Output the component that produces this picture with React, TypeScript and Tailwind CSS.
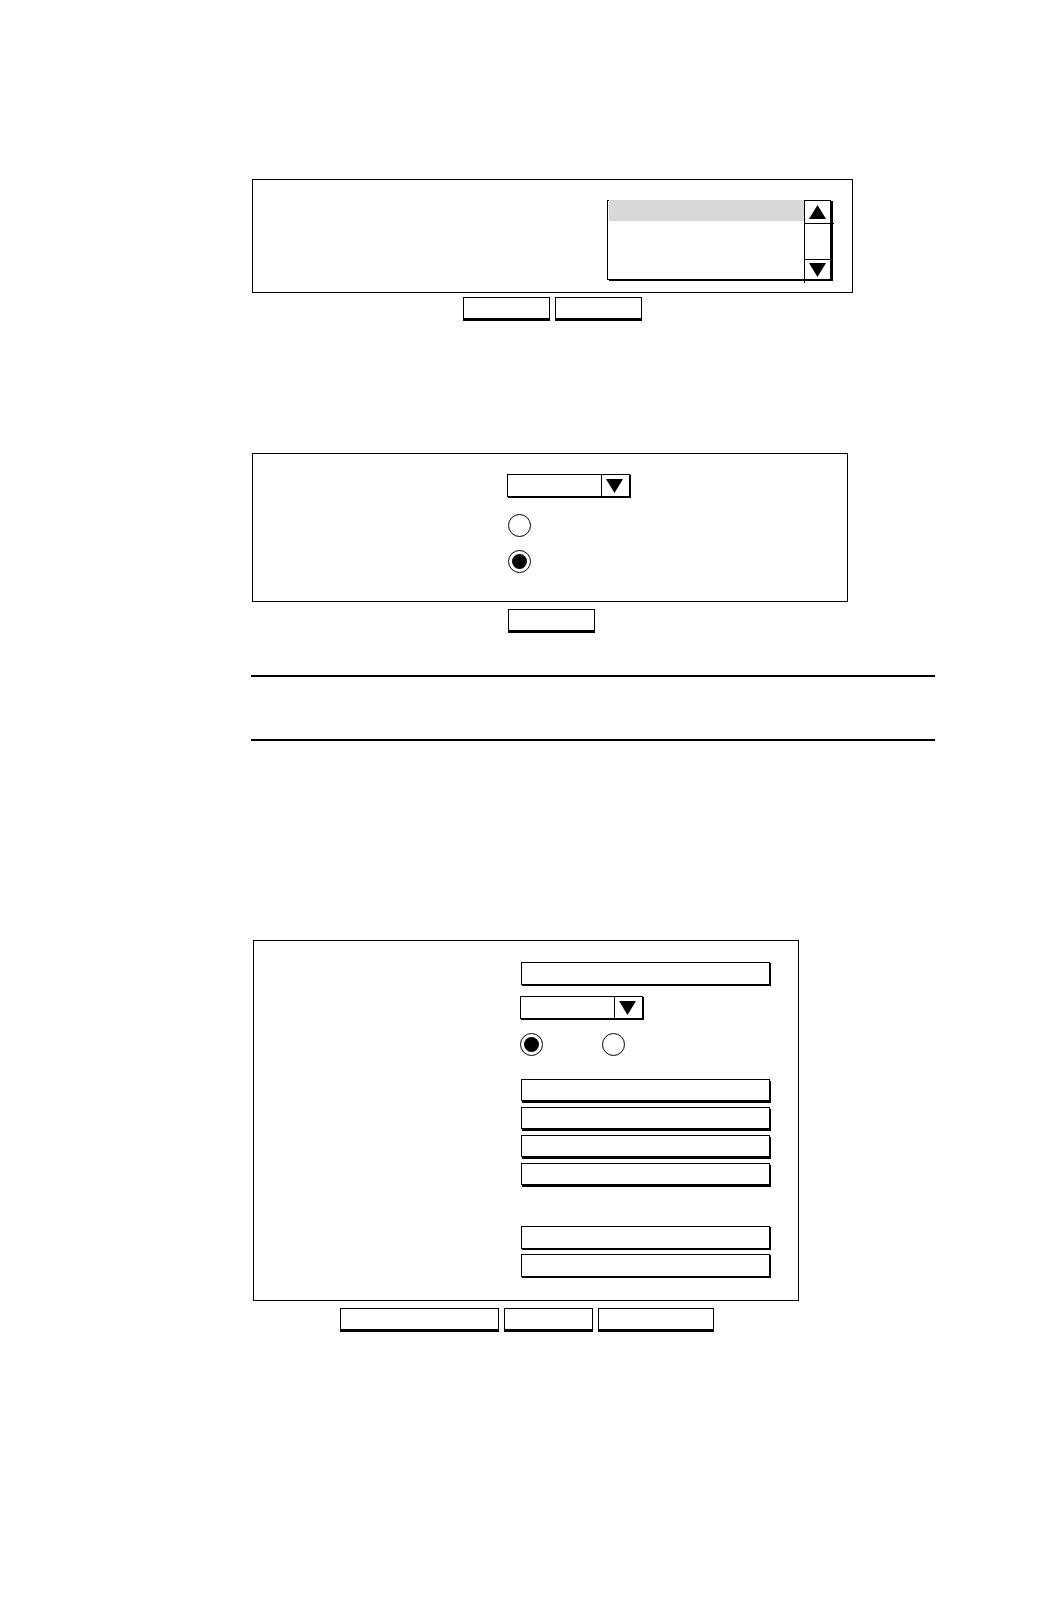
import { useState } from 'react'
import type { ReactNode } from 'react'

function Arrow({ up = false }: { up?: boolean }) {
  return (
    <svg width="17" height="14" viewBox="0 0 17 14" aria-hidden="true" className="block shrink-0">
      <path d={up ? 'M8.5 0L17 14H0Z' : 'M0 0H17L8.5 14Z'} fill="#000" />
    </svg>
  )
}

function Panel({ className, children }: { className: string; children: ReactNode }) {
  return <div className={`w-full border border-black ${className}`}>{children}</div>
}

function Button({ label, className = 'w-[87px]' }: { label: string; className?: string }) {
  return (
    <button
      type="button"
      aria-label={label}
      className={`h-6 border border-b-3 border-black bg-white ${className}`}
    />
  )
}

function TextField({ label, heavy = false }: { label: string; heavy?: boolean }) {
  return (
    <input
      type="text"
      aria-label={label}
      className={`block w-full max-w-[249px] border border-black bg-white px-2 text-sm outline-none ${
        heavy ? 'h-[22px] shadow-[1px_2px_0_#000]' : 'h-[23px] shadow-[1px_1px_0_#000]'
      }`}
    />
  )
}

function Dropdown({ label }: { label: string }) {
  return (
    <div className="relative h-[23px] w-[123px] border border-black shadow-[1px_1px_0_#000]">
      <select aria-label={label} className="block h-full w-full appearance-none bg-white px-2 text-sm outline-none">
        <option />
      </select>
      <span className="pointer-events-none absolute inset-y-0 right-0 flex w-7 items-center border-l border-black pl-1">
        <Arrow />
      </span>
    </div>
  )
}

type RadioProps = { name: string; label: string; defaultChecked?: boolean }

function Radio({ name, label, defaultChecked }: RadioProps) {
  return (
    <input
      type="radio"
      name={name}
      aria-label={label}
      defaultChecked={defaultChecked}
      className="block size-[23px] appearance-none rounded-full border border-black bg-white p-[3px] checked:bg-black checked:bg-clip-content"
    />
  )
}

function ListBox() {
  const [selected, setSelected] = useState(0)

  return (
    <div className="flex h-20 w-56 border border-black shadow-[2px_1px_0_#000]">
      <div
        role="listbox"
        aria-label="Entries"
        tabIndex={0}
        className="-mt-px min-w-0 flex-1 pl-px outline-none"
      >
        {[0, 1, 2].map((item) => (
          <div
            key={item}
            role="option"
            aria-label={`Entry ${item + 1}`}
            aria-selected={item === selected}
            onClick={() => setSelected(item)}
            className="h-[21px] aria-selected:bg-[#d8d8d8]"
          />
        ))}
      </div>
      <div className="-mb-1 flex w-[26px] flex-col border-l border-black pb-1">
        <button
          type="button"
          aria-label="Scroll up"
          onClick={() => setSelected(Math.max(0, selected - 1))}
          className="-mr-1 flex h-[23px] items-center border-b border-black pl-1"
        >
          <Arrow up />
        </button>
        <div className="flex-1" />
        <button
          type="button"
          aria-label="Scroll down"
          onClick={() => setSelected(Math.min(2, selected + 1))}
          className="flex h-5 items-center border-t border-black pl-1"
        >
          <Arrow />
        </button>
      </div>
    </div>
  )
}

export default function App() {
  return (
    <main className="min-h-screen bg-white pt-[179px] pr-[127px] pb-20 pl-[251px] font-['Liberation_Sans',sans-serif] text-black">
      {/* List selection */}
      <form className="ml-px max-w-[601px]">
        <Panel className="flex justify-end pt-5 pr-[21px] pb-3">
          <ListBox />
        </Panel>
        <div className="mt-1 flex justify-center gap-[5px]">
          <Button label="Edit" />
          <Button label="Delete" />
        </div>
      </form>

      {/* Mode settings */}
      <form className="mt-[132px] ml-px max-w-[596px]">
        <Panel className="pt-5 pb-7 pl-[254px]">
          <Dropdown label="Mode" />
          <div className="mt-[17px] flex flex-col gap-[13px] pl-px">
            <Radio name="mode" label="Enable" />
            <Radio name="mode" label="Disable" defaultChecked />
          </div>
        </Panel>
        <div className="mt-[7px] flex pl-64">
          <Button label="Apply" />
        </div>
      </form>

      <div className="mt-[42px] h-[66px] border-y-2 border-black" />

      {/* Entry details */}
      <form className="mt-[199px] ml-[2px] max-w-[546px]">
        <Panel className="pt-[21px] pr-7 pb-[23px] pl-[266px]">
          <div className="pl-px">
            <TextField label="Name" />
          </div>
          <div className="mt-[11px]">
            <Dropdown label="Type" />
          </div>
          <div className="mt-[14px] flex gap-[59px]">
            <Radio name="state" label="On" defaultChecked />
            <Radio name="state" label="Off" />
          </div>
          <div className="mt-[23px] flex flex-col gap-[6px] pl-px">
            <TextField label="Field 1" heavy />
            <TextField label="Field 2" heavy />
            <TextField label="Field 3" heavy />
            <TextField label="Field 4" heavy />
          </div>
          <div className="mt-[41px] flex flex-col gap-[5px] pl-px">
            <TextField label="Field 5" />
            <TextField label="Field 6" />
          </div>
        </Panel>
        <div className="mt-[7px] flex gap-[5px] pl-[87px]">
          <Button label="Save and continue" className="w-[159px]" />
          <Button label="Save" className="w-[89px]" />
          <Button label="Cancel" className="w-[116px]" />
        </div>
      </form>
    </main>
  )
}
